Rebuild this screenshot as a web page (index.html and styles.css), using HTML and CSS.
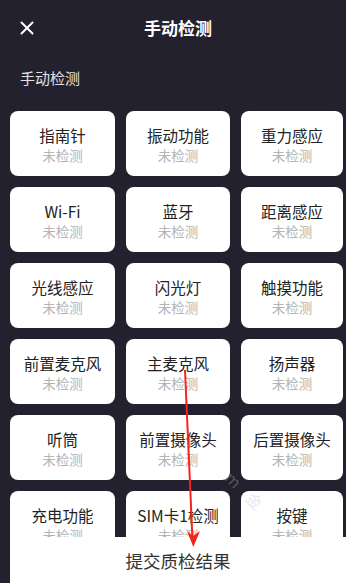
FILE: index.html
```html
<!DOCTYPE html>
<html lang="zh">
<head>
<meta charset="utf-8">
<link rel="stylesheet" href="styles.css">
</head>
<body>
<div class="screen">
  <header class="topbar">
    <svg class="close" width="14" height="14" viewBox="0 0 14 14"><path d="M1.5 1.5 L12.5 12.5 M12.5 1.5 L1.5 12.5" stroke="#fff" stroke-width="2" stroke-linecap="round" fill="none"/></svg>
    <div class="title">手动检测</div>
  </header>
  <div class="section">手动检测</div>
  <div class="grid">
    <div class="card"><div class="name">指南针</div><div class="state">未检测</div></div>
    <div class="card"><div class="name">振动功能</div><div class="state">未检测</div></div>
    <div class="card"><div class="name">重力感应</div><div class="state">未检测</div></div>
    <div class="card"><div class="name">Wi-Fi</div><div class="state">未检测</div></div>
    <div class="card"><div class="name">蓝牙</div><div class="state">未检测</div></div>
    <div class="card"><div class="name">距离感应</div><div class="state">未检测</div></div>
    <div class="card"><div class="name">光线感应</div><div class="state">未检测</div></div>
    <div class="card"><div class="name">闪光灯</div><div class="state">未检测</div></div>
    <div class="card"><div class="name">触摸功能</div><div class="state">未检测</div></div>
    <div class="card"><div class="name">前置麦克风</div><div class="state">未检测</div></div>
    <div class="card"><div class="name">主麦克风</div><div class="state">未检测</div></div>
    <div class="card"><div class="name">扬声器</div><div class="state">未检测</div></div>
    <div class="card"><div class="name">听筒</div><div class="state">未检测</div></div>
    <div class="card"><div class="name">前置摄像头</div><div class="state">未检测</div></div>
    <div class="card"><div class="name">后置摄像头</div><div class="state">未检测</div></div>
    <div class="card"><div class="name">充电功能</div><div class="state">未检测</div></div>
    <div class="card"><div class="name">SIM卡1检测</div><div class="state">未检测</div></div>
    <div class="card"><div class="name">按键</div><div class="state">未检测</div></div>
  </div>
  <div class="submit">提交质检结果</div>
  <div class="watermark">m&nbsp;&nbsp;&nbsp;&nbsp;金</div>
  <svg class="arrow" width="346" height="583" viewBox="0 0 346 583">
    <line x1="185" y1="370" x2="192.5" y2="540" stroke="#f5231f" stroke-width="2"/>
    <path d="M187 531 L193.3 547 L200 531 L193 536 Z" fill="#f5231f"/>
  </svg>
</div>
</body>
</html>
```
FILE: styles.css
```css
html, body {
  margin: 0;
  padding: 0;
}
body {
  width: 346px;
  height: 583px;
  overflow: hidden;
  background: #22212d;
  font-family: "Noto Sans CJK SC", "Noto Sans", sans-serif;
}
.screen {
  position: relative;
  width: 346px;
  height: 583px;
  overflow: hidden;
  background: #22212d;
}
.topbar {
  height: 56px;
  display: flex;
  align-items: center;
  justify-content: center;
  position: relative;
}
.close {
  position: absolute;
  left: 20px;
  top: 21px;
}
.title {
  color: #fff;
  font-size: 17px;
  font-weight: 700;
  line-height: 24px;
  margin-left: 10px;
  margin-top: 0;
}
.section {
  margin-top: 10px;
  padding-left: 20px;
  color: #e2e2e6;
  font-size: 15px;
  line-height: 24px;
}
.grid {
  margin-top: 21px;
  padding-left: 10px;
  display: grid;
  grid-template-columns: 105px 104px 102px;
  column-gap: 11px;
  row-gap: 11px;
  grid-auto-rows: 65px;
}
.card {
  background: #fff;
  border-radius: 8px;
  display: flex;
  flex-direction: column;
  align-items: center;
  padding-top: 14px;
  box-sizing: border-box;
}
.name {
  color: #222;
  font-size: 15.5px;
  line-height: 20px;
  white-space: nowrap;
}
.state {
  color: #b4b4b4;
  font-size: 13.5px;
  line-height: 20px;
}
.submit {
  position: absolute;
  left: 10px;
  right: 0;
  bottom: 0;
  height: 46px;
  background: #fff;
  color: #333;
  font-size: 17.5px;
  display: flex;
  align-items: center;
  justify-content: center;
  padding-bottom: 0;
}
.watermark {
  position: absolute;
  left: 222px;
  top: 478px;
  color: rgba(190, 190, 200, 0.35);
  font-size: 16px;
  transform: rotate(45deg);
}
.arrow {
  position: absolute;
  left: 0;
  top: 0;
}
```
